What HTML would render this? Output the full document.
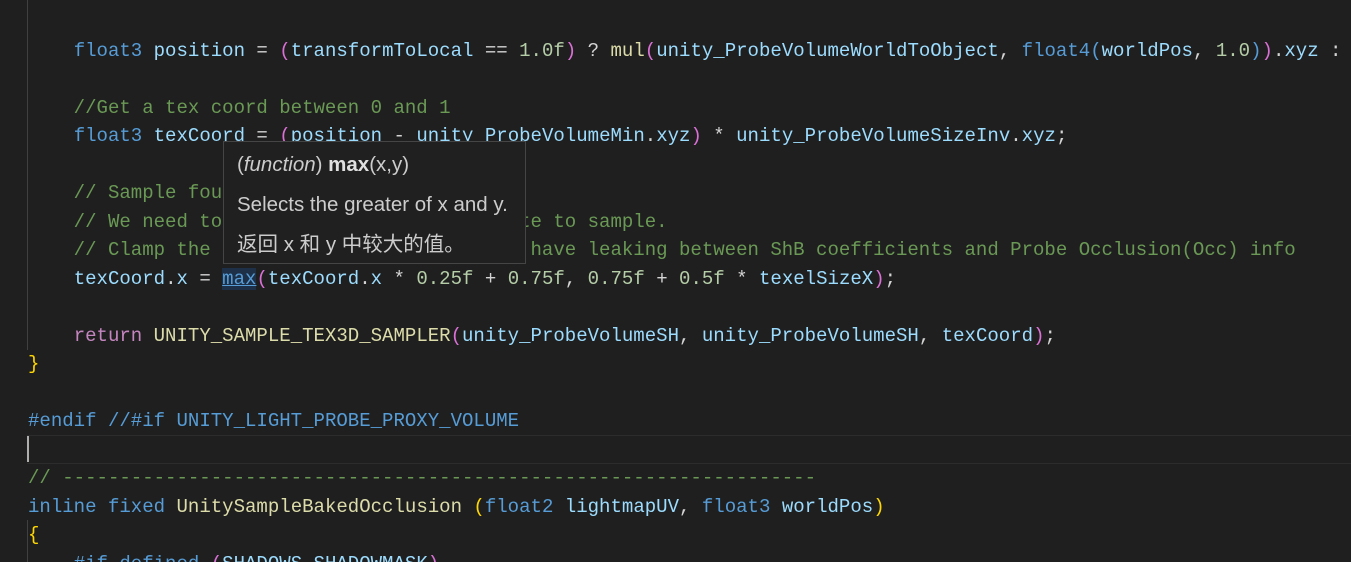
<!DOCTYPE html>
<html><head><meta charset="utf-8"><style>
html,body{margin:0;padding:0;background:#1f1f1f;width:1351px;height:562px;overflow:hidden;position:relative}
.ed{position:absolute;left:0;top:-20.5px;width:1351px;height:600px;overflow:hidden;font-family:"Liberation Mono",monospace;font-size:19.05px;color:#d4d4d4}
.l{position:absolute;left:28px;height:28.5px;line-height:28.5px;white-space:pre}
.k{color:#569cd6}.v{color:#9cdcfe}.c{color:#6a9955}.n{color:#b5cea8}.f{color:#dcdcaa}.p{color:#da70d6}.g{color:#ffd700}.r{color:#c586c0}
.guide{position:absolute;left:27px;width:1px;background:#404040}
.tip{position:absolute;left:223px;top:141px;width:301px;height:121px;background:#202020;border:1px solid #454545;font-family:"Liberation Sans","Noto Sans CJK SC",sans-serif;font-size:20.5px;color:#cccccc;overflow:hidden}
.tip div{position:absolute;left:13px;white-space:nowrap;line-height:24px}
</style></head><body>
<div class="guide" style="top:0;height:350px"></div>
<div class="guide" style="top:520px;height:42px"></div>
<div style="position:absolute;left:27px;top:435px;width:1324px;height:27px;border-top:1px solid #2c2c2c;border-bottom:1px solid #2c2c2c"></div>
<div style="position:absolute;left:27px;top:436px;width:2px;height:26px;background:#aeafad"></div>
<div class="ed">
<div class="l" style="top:0"><span class="c">    //</span></div>
<div class="l" style="top:57px">    <span class="k">float3</span> <span class="v">position</span> = <span class="p">(</span><span class="v">transformToLocal</span> == <span class="n">1.0f</span><span class="p">)</span> ? <span class="f">mul</span><span class="p">(</span><span class="v">unity_ProbeVolumeWorldToObject</span>, <span class="k">float4</span><span class="k">(</span><span class="v">worldPos</span>, <span class="n">1.0</span><span class="k">)</span><span class="p">)</span>.<span class="v">xyz</span> : worldPos;</div>
<div class="l" style="top:114px"><span class="c">    //Get a tex coord between 0 and 1</span></div>
<div class="l" style="top:142.5px">    <span class="k">float3</span> <span class="v">texCoord</span> = <span class="p">(</span><span class="v">position</span> - <span class="v">unity_ProbeVolumeMin</span>.<span class="v">xyz</span><span class="p">)</span> * <span class="v">unity_ProbeVolumeSizeInv</span>.<span class="v">xyz</span>;</div>
<div class="l" style="top:199.5px"><span class="c">    // Sample fourth texture in the atlas</span></div>
<div class="l" style="top:228px"><span class="c">    // We need to compute proper X coordinate to sample.</span></div>
<div class="l" style="top:256.5px"><span class="c">    // Clamp the coordinate otherwize we'll have leaking between ShB coefficients and Probe Occlusion(Occ) info</span></div>
<div class="l" style="top:285px">    <span class="v">texCoord</span>.<span class="v">x</span> = <span class="f" style="text-decoration:underline;color:#569cd6;background:#1d3047">max</span><span class="p">(</span><span class="v">texCoord</span>.<span class="v">x</span> * <span class="n">0.25f</span> + <span class="n">0.75f</span>, <span class="n">0.75f</span> + <span class="n">0.5f</span> * <span class="v">texelSizeX</span><span class="p">)</span>;</div>
<div class="l" style="top:342px">    <span class="r">return</span> <span class="f">UNITY_SAMPLE_TEX3D_SAMPLER</span><span class="p">(</span><span class="v">unity_ProbeVolumeSH</span>, <span class="v">unity_ProbeVolumeSH</span>, <span class="v">texCoord</span><span class="p">)</span>;</div>
<div class="l" style="top:370.5px"><span class="g">}</span></div>
<div class="l" style="top:427.5px"><span class="k">#endif</span> <span class="k">//#if UNITY_LIGHT_PROBE_PROXY_VOLUME</span></div>
<div class="l" style="top:484.5px"><span class="c">// ------------------------------------------------------------------</span></div>
<div class="l" style="top:513px"><span class="k">inline</span> <span class="k">fixed</span> <span class="f">UnitySampleBakedOcclusion</span> <span class="g">(</span><span class="k">float2</span> <span class="v">lightmapUV</span>, <span class="k">float3</span> <span class="v">worldPos</span><span class="g">)</span></div>
<div class="l" style="top:541.5px"><span class="g">{</span></div>
<div class="l" style="top:570px">    <span class="k">#if</span> <span class="k">defined</span> <span class="p">(</span><span class="v">SHADOWS_SHADOWMASK</span><span class="p">)</span></div>
</div>
<div class="tip">
<div style="top:11px">(<i>function</i>) <b style="color:#e0e0e0">max</b>(x,y)</div>
<div style="top:51px">Selects the greater of x and y.</div>
<div style="top:91px">返回 x 和 y 中较大的值。</div>
</div>
</body></html>
